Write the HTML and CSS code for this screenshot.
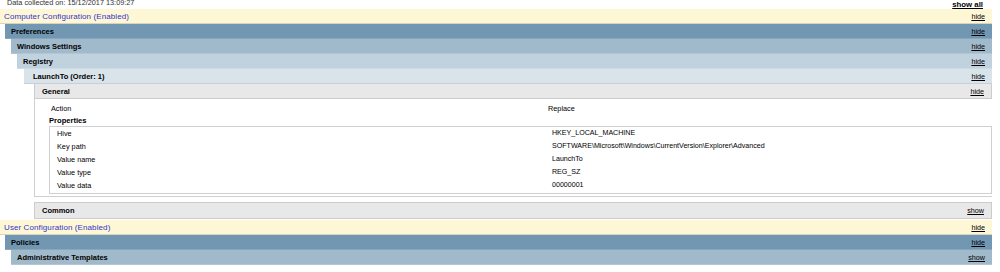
FILE: index.html
```html
<!DOCTYPE html>
<html lang="en">
<head>
  <meta charset="UTF-8">
  <title>Group Policy Results</title>
  <link rel="stylesheet" href="styles.css">
</head>
<body>
  <div class="report">
    <div class="title">
      <span>Data collected on: 15/12/2017 13:09:27</span>
      <a class="showall" href="#">show all</a>
    </div>

    <div class="he0"><span>Computer Configuration (Enabled)</span><a href="#">hide</a></div>
    <div class="lvl l1">
      <div class="hdr he1h"><span>Preferences</span><a href="#">hide</a></div>
      <div class="lvl l2">
        <div class="hdr he2"><span>Windows Settings</span><a href="#">hide</a></div>
        <div class="lvl l3">
          <div class="hdr he3"><span>Registry</span><a href="#">hide</a></div>
          <div class="lvl l4">
            <div class="hdr he4"><span>LaunchTo (Order: 1)</span><a href="#">hide</a></div>
            <div class="lvl l5">
              <div class="hdr he5"><span>General</span><a href="#">hide</a></div>
              <div class="box">
                <div class="info">
                  <span>Action</span>
                  <span>Replace</span>
                </div>
                <div class="subtitle">Properties</div>
                <div class="props">
                  <div class="prow"><span>Hive</span><span>HKEY_LOCAL_MACHINE</span></div>
                  <div class="prow"><span>Key path</span><span>SOFTWARE\Microsoft\Windows\CurrentVersion\Explorer\Advanced</span></div>
                  <div class="prow"><span>Value name</span><span>LaunchTo</span></div>
                  <div class="prow"><span>Value type</span><span>REG_SZ</span></div>
                  <div class="prow"><span>Value data</span><span>00000001</span></div>
                </div>
              </div>
              <div class="hdr he5 common"><span>Common</span><a href="#">show</a></div>
            </div>
          </div>
        </div>
      </div>
    </div>

    <div class="he0"><span>User Configuration (Enabled)</span><a href="#">hide</a></div>
    <div class="lvl l1">
      <div class="hdr he1h"><span>Policies</span><a href="#">hide</a></div>
      <div class="lvl l2">
        <div class="hdr he2"><span>Administrative Templates</span><a href="#">show</a></div>
      </div>
    </div>
  </div>
</body>
</html>
```

FILE: styles.css
```css
body {
  margin: 0;
  background: #ffffff;
  font-family: "Liberation Sans", Arial, sans-serif;
  font-size: 7.3px;
  color: #000000;
}
.report {
  width: 992px;
}
.title {
  display: flex;
  justify-content: space-between;
  height: 9px;
  line-height: 6px;
  padding: 0 9px 0 7px;
  color: #333333;
  overflow: visible;
}
.title .showall {
  color: #000000;
  font-weight: bold;
  font-size: 7.8px;
  line-height: 9px;
}
a {
  color: #000000;
  text-decoration: underline;
  font-size: 7.2px;
}
.he0, .hdr {
  display: flex;
  justify-content: space-between;
  align-items: center;
  height: 14px;
  border-bottom: 1px solid #c8c8c8;
  padding: 0 7px 0 6px;
}
.he0 {
  background: #fef7d6;
  color: #3333cc;
  font-size: 8px;
  letter-spacing: 0.1px;
  padding-left: 4px;
  border-bottom-color: #d8d4c0;
}
.he0 a {
  letter-spacing: 0;
}
.hdr span {
  font-weight: bold;
  font-size: 7.5px;
}
.he1h { background: #7197b3; border-bottom-color: #8aa6bb; }
.he2 { background: #a0bacb; border-bottom-color: #b4c6d3; }
.he3 { background: #c0d2de; border-bottom-color: #cfdbe4; }
.he4 { background: #d9e3ea; border-bottom-color: #c8d0d6; padding-left: 9px; }
.he5 {
  background: #e8e8e8;
  border: 1px solid #cccccc;
  border-top: none;
  padding-left: 7px;
}
.l1 { margin-left: 5px; }
.l2 { margin-left: 6px; }
.l3 { margin-left: 6px; }
.l4 { margin-left: 7px; }
.l5 { margin-left: 10px; }
.box {
  border-left: 1px solid #d0d0d0;
  border-bottom: 1px solid #d0d0d0;
  padding: 5px 0 2px 14px;
  margin-bottom: 5px;
}
.info {
  display: grid;
  grid-template-columns: 497px 1fr;
  height: 10px;
  line-height: 10px;
  padding-left: 2px;
}
.subtitle {
  font-weight: bold;
  font-size: 7.6px;
  line-height: 10px;
  margin-top: 2px;
}
.props {
  border: 1px solid #d0d0d0;
  padding-bottom: 1px;
}
.prow {
  display: grid;
  grid-template-columns: 495px 1fr;
  height: 13px;
  line-height: 13px;
  padding-left: 7px;
}
.prow span:last-child {
  font-size: 7.1px;
}
.common {
  border-top: 1px solid #cccccc;
  height: 15px;
  margin-bottom: 1px;
}
```
